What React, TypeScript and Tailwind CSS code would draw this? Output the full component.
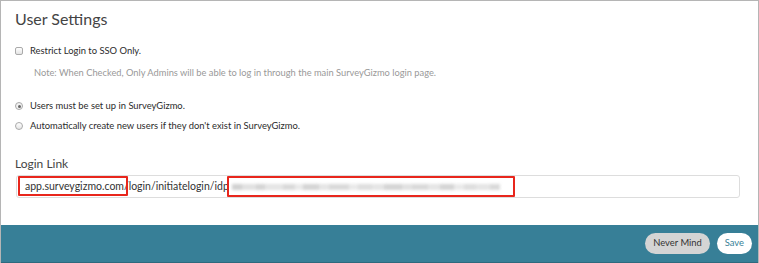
import React from 'react';

const blurred = [
  { w: 10, o: 0.55 }, { w: 14, o: 0.35 }, { w: 9, o: 0.5 }, { w: 18, o: 0.3 }, { w: 12, o: 0.45 },
  { w: 8, o: 0.25 }, { w: 16, o: 0.5 }, { w: 10, o: 0.3 }, { w: 20, o: 0.45 }, { w: 9, o: 0.25 },
  { w: 14, o: 0.4 }, { w: 12, o: 0.3 }, { w: 18, o: 0.5 }, { w: 10, o: 0.35 }, { w: 16, o: 0.45 },
  { w: 12, o: 0.3 }, { w: 14, o: 0.5 }, { w: 10, o: 0.25 }, { w: 12, o: 0.4 }, { w: 14, o: 0.3 },
  { w: 10, o: 0.45 },
];

export default function App() {
  return (
    <div
      className="w-[759px] h-[263px] bg-white flex flex-col border border-b-0 border-[#b5b5b5] overflow-hidden text-[#2b2b2b]"
      style={{ fontFamily: 'Lato, "Open Sans", sans-serif' }}
    >
      <div className="flex-1 px-[14px] pt-[8px]">
        <h1 className="text-[16px] leading-[20px] text-[#444] font-normal">User Settings</h1>

        <label className="flex items-center gap-[7px] mt-[15px] text-[9.4px] leading-[14px]">
          <span className="w-[8px] h-[8px] rounded-[2px] border border-[#aaa] bg-gradient-to-b from-white to-[#e4e4e4]" />
          Restrict Login to SSO Only.
        </label>
        <p className="ml-[19px] mt-[9px] text-[9.3px] leading-[12px] text-[#999]">
          Note: When Checked, Only Admins will be able to log in through the main SurveyGizmo login page.
        </p>

        <div className="mt-[20px] flex flex-col gap-[6px] text-[9.4px] leading-[14px]">
          <label className="flex items-center gap-[7px]">
            <span className="w-[8px] h-[8px] rounded-full border border-[#aaa] bg-[#f2f2f2] flex items-center justify-center">
              <span className="w-[3px] h-[3px] rounded-full bg-[#666]" />
            </span>
            Users must be set up in SurveyGizmo.
          </label>
          <label className="flex items-center gap-[7px]">
            <span className="w-[8px] h-[8px] rounded-full border border-[#aaa] bg-gradient-to-b from-white to-[#e4e4e4]" />
            Automatically create new users if they don't exist in SurveyGizmo.
          </label>
        </div>

        <h2 className="mt-[23px] text-[12px] leading-[16px] text-[#444]">Login Link</h2>
        <div className="mt-[3px] ml-[1px] w-[724px] h-[23px] rounded-[3px] border border-[#ddd] flex items-center text-[10.5px] text-[#333] relative">
          <span className="ml-[8px]">app.surveygizmo.com</span>
          <span>/login/initiatelogin/idp</span>
          <span className="flex items-center h-[12px] ml-[3px] blur-[1.5px]">
            {blurred.map((b, i) => (
              <span key={i} className="h-[6px] bg-[#aaa]" style={{ width: b.w, opacity: b.o }} />
            ))}
          </span>
          <span className="absolute left-[1px] top-[0px] w-[110px] h-[20px] border-2 border-[#e8261c] rounded-[1px]" />
          <span className="absolute left-[210px] top-[0px] w-[288px] h-[21px] border-2 border-[#e8261c] rounded-[1px]" />
        </div>
      </div>

      <div className="h-[38px] bg-[#377f97] flex items-center justify-end gap-[7px] pr-[6px] border-b border-[#2d6a7e]">
        <button className="h-[21px] px-[8px] rounded-full bg-[#d4d4d4] text-[9.4px] text-[#333]">Never Mind</button>
        <button className="h-[21px] px-[8px] rounded-full bg-white text-[9.4px] text-[#377f97]">Save</button>
      </div>
    </div>
  );
}
